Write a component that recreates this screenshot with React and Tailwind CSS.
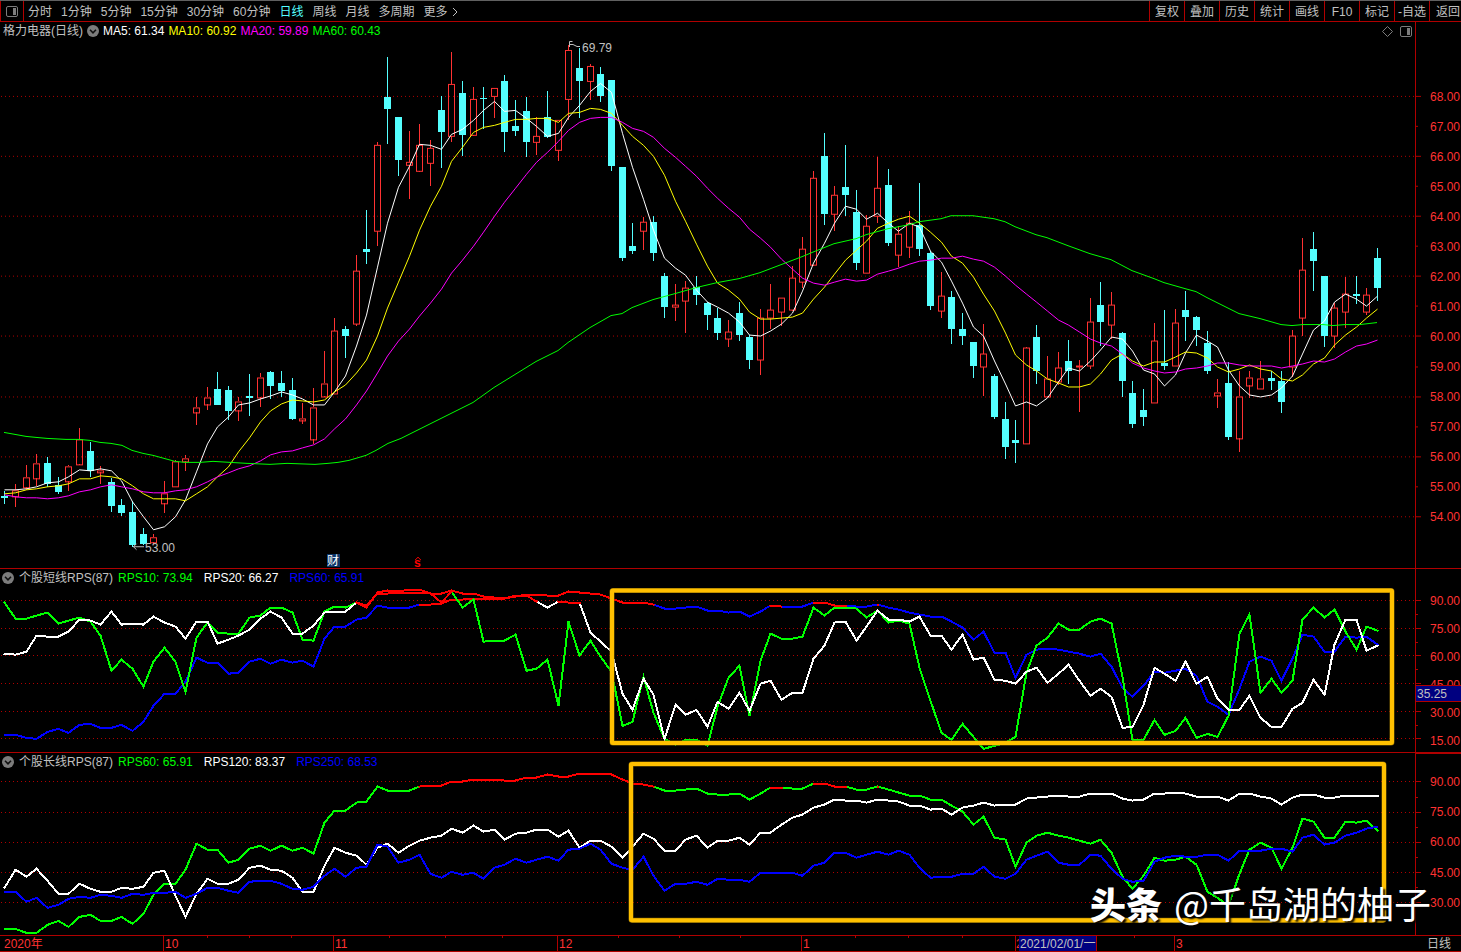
import clsx from 'clsx';

const periods = ['分时', '1分钟', '5分钟', '15分钟', '30分钟', '60分钟', '日线', '周线', '月线', '多周期'];
const tools = ['复权', '叠加', '历史', '统计', '画线', 'F10', '标记', '-自选'];

const UP = '#ff3232';
const DOWN = '#54ffff';
const GRID = '#b00000';

// [direction, high, body top, body bottom, low] in plot coordinates
const candles = [
  ['d', 492, 497, 499, 505], ['u', 485, 491, 497, 508], ['u', 466, 478, 488, 491], ['u', 455, 464, 479, 487],
  ['d', 458, 464, 485, 488], ['d', 478, 486, 493, 495], ['u', 466, 467, 482, 492], ['u', 429, 440, 465, 466],
  ['d', 443, 452, 472, 478], ['u', 467, 471, 473, 485], ['d', 479, 483, 507, 513], ['d', 500, 506, 514, 517],
  ['d', 502, 513, 546, 548], ['d', 529, 535, 545, 546], ['u', 535, 538, 543, 545], ['u', 482, 494, 504, 514],
  ['u', 461, 462, 487, 487], ['u', 456, 459, 462, 472], ['u', 398, 408, 413, 426], ['u', 388, 398, 405, 411],
  ['d', 373, 390, 406, 406], ['d', 387, 391, 412, 421], ['u', 398, 402, 411, 422], ['d', 375, 397, 399, 417],
  ['u', 374, 378, 398, 408], ['d', 371, 373, 387, 400], ['d', 372, 384, 392, 398], ['d', 379, 391, 420, 421],
  ['u', 404, 419, 421, 425], ['u', 389, 408, 440, 445], ['u', 351, 384, 397, 398], ['u', 318, 331, 394, 394],
  ['d', 326, 329, 336, 358], ['u', 255, 271, 324, 326], ['d', 210, 249, 252, 264], ['u', 142, 145, 231, 246],
  ['d', 57, 97, 109, 144], ['d', 117, 117, 160, 176], ['u', 131, 162, 165, 199], ['u', 124, 145, 171, 172],
  ['u', 140, 148, 163, 186], ['d', 96, 110, 132, 168], ['u', 52, 84, 136, 142], ['d', 81, 93, 135, 156],
  ['u', 87, 99, 135, 136], ['d', 87, 98, 99, 129], ['u', 88, 88, 96, 118], ['d', 75, 81, 132, 152],
  ['d', 100, 126, 131, 136], ['d', 97, 111, 142, 157], ['u', 117, 136, 142, 155], ['d', 91, 117, 137, 138],
  ['u', 120, 120, 150, 161], ['u', 45, 50, 99, 120], ['d', 48, 68, 81, 118], ['u', 64, 66, 81, 100],
  ['d', 67, 74, 96, 102], ['d', 80, 80, 166, 171], ['d', 167, 167, 258, 261], ['d', 223, 246, 251, 254],
  ['u', 217, 222, 231, 250], ['d', 216, 222, 253, 261], ['d', 273, 276, 307, 318], ['u', 284, 305, 307, 321],
  ['u', 281, 288, 301, 333], ['d', 276, 287, 295, 305], ['d', 302, 303, 315, 330], ['d', 308, 318, 333, 340],
  ['u', 320, 332, 339, 347], ['d', 302, 313, 335, 341], ['d', 335, 337, 360, 369], ['u', 309, 318, 360, 376],
  ['u', 284, 310, 318, 329], ['u', 298, 298, 312, 326], ['u', 266, 278, 310, 311], ['u', 237, 249, 282, 288],
  ['u', 171, 178, 265, 266], ['d', 133, 156, 214, 225], ['u', 186, 195, 214, 231], ['d', 145, 187, 195, 216],
  ['d', 190, 212, 263, 270], ['u', 215, 226, 273, 273], ['u', 157, 188, 216, 223], ['d', 169, 185, 243, 246],
  ['u', 226, 234, 255, 267], ['u', 211, 223, 247, 258], ['d', 183, 225, 249, 256], ['d', 251, 253, 306, 310],
  ['u', 272, 296, 311, 318], ['d', 291, 297, 329, 344], ['d', 313, 329, 336, 345], ['d', 342, 342, 366, 379],
  ['u', 324, 354, 367, 397], ['d', 375, 377, 418, 420], ['d', 403, 420, 448, 460], ['d', 421, 441, 444, 464],
  ['u', 347, 348, 444, 444], ['d', 325, 337, 372, 385], ['u', 356, 379, 397, 398], ['u', 352, 368, 382, 386],
  ['d', 340, 361, 371, 385], ['u', 360, 366, 367, 413], ['u', 298, 322, 366, 369], ['d', 282, 305, 322, 346],
  ['u', 292, 305, 325, 339], ['d', 332, 333, 382, 398], ['d', 382, 394, 425, 429], ['d', 390, 411, 418, 427],
  ['u', 323, 341, 403, 403], ['d', 310, 363, 366, 370], ['u', 309, 323, 366, 366], ['d', 291, 310, 317, 341],
  ['d', 316, 317, 330, 346], ['d', 331, 343, 371, 375], ['u', 380, 393, 396, 409], ['d', 362, 384, 438, 441],
  ['u', 371, 397, 439, 453], ['u', 372, 378, 386, 399], ['u', 361, 379, 389, 389], ['d', 372, 379, 382, 391],
  ['d', 372, 382, 403, 414], ['u', 330, 336, 367, 378], ['u', 238, 270, 318, 336], ['d', 232, 249, 261, 291],
  ['d', 276, 276, 336, 347], ['u', 303, 308, 336, 348], ['u', 277, 294, 312, 328], ['d', 276, 294, 296, 304],
  ['u', 288, 295, 312, 315], ['d', 248, 258, 288, 301],
];

// averages for the first bars, whose history is off screen
const ma5Seed = [490, 490, 489, 487];
const ma10Seed = [494, 493, 490, 489, 487, 486, 484, 479, 479];
const ma20Seed = [495, 497, 498, 498, 499, 498, 496, 492, 490, 487, 485, 487, 489, 492, 493, 493, 491, 490, 487];

const ma60 =
  '4,433 15,435 26,437 36,438 47,439 66,440 79,440 90,441 100,443 111,444 122,446 132,451 143,454 153,456 164,459 175,462 185,463 200,463 213,462 230,463 247,464 270,465 287,464 315,465 328,464 338,463 349,461 366,456 376,451 388,444 401,439 441,419 473,403 494,388 515,375 536,362 558,351 568,343 590,328 611,316 622,314 632,308 653,300 675,294 696,288 717,283 739,279 760,273 781,265 802,257 814,252 834,244 856,239 866,235 888,229 909,225 919,222 941,219 951,216 973,216 994,219 1005,222 1015,227 1036,235 1047,238 1068,246 1090,254 1111,260 1132,271 1154,279 1164,283 1185,289 1196,292 1207,298 1217,303 1239,314 1260,319 1281,325 1292,326 1303,325 1323,325 1333,326 1345,325 1360,325 1377,323';

const shortRps = [
  {
    color: '#0000ff',
    hot: [[39, 61], [72, 73], [76, 79], [82, 82]],
    data: [735, 735, 738, 739, 732, 729, 733, 725, 724, 728, 728, 725, 731, 722, 706, 694, 694, 682, 658, 663, 663, 674, 673, 662, 659, 664, 660, 663, 661, 667, 639, 627, 627, 620, 618, 606, 608, 608, 608, 605, 605, 604, 600, 600, 599, 599, 599, 599, 597, 595, 595, 596, 596, 592, 593, 594, 595, 599, 603, 603, 603, 605, 609, 609, 608, 607, 611, 611, 613, 612, 617, 612, 606, 607, 607, 607, 603, 603, 606, 606, 607, 607, 605, 608, 610, 613, 615, 617, 617, 622, 628, 640, 632, 653, 653, 678, 655, 650, 649, 650, 652, 654, 657, 654, 667, 688, 697, 686, 672, 673, 671, 669, 676, 702, 707, 715, 689, 662, 657, 661, 681, 659, 635, 637, 652, 652, 637, 638, 637, 645],
  },
  {
    color: '#00ff00',
    hot: [[33, 42]],
    data: [603, 619, 619, 616, 613, 624, 621, 618, 622, 636, 671, 660, 669, 687, 662, 648, 662, 692, 638, 623, 633, 634, 634, 618, 616, 608, 608, 613, 640, 641, 612, 607, 608, 603, 608, 593, 591, 592, 590, 590, 594, 603, 592, 608, 600, 642, 641, 641, 635, 671, 669, 660, 706, 622, 656, 641, 657, 672, 726, 722, 677, 713, 739, 745, 740, 740, 746, 707, 678, 666, 716, 661, 634, 639, 639, 637, 608, 616, 608, 608, 609, 618, 611, 623, 621, 624, 668, 701, 733, 740, 724, 737, 749, 746, 743, 737, 673, 646, 638, 624, 630, 630, 622, 619, 624, 677, 740, 740, 720, 735, 731, 718, 738, 734, 737, 716, 634, 615, 693, 679, 693, 681, 620, 608, 618, 610, 632, 650, 627, 631],
  },
  {
    color: '#ffffff',
    hot: [[33, 50], [52, 54]],
    data: [654, 655, 652, 636, 637, 637, 632, 620, 621, 625, 612, 625, 624, 625, 617, 623, 627, 639, 622, 622, 644, 640, 636, 630, 619, 612, 618, 634, 634, 626, 613, 612, 612, 603, 606, 594, 594, 593, 593, 593, 594, 594, 591, 594, 594, 597, 598, 599, 596, 596, 602, 608, 602, 603, 603, 633, 642, 652, 694, 710, 679, 695, 739, 705, 715, 710, 727, 702, 709, 693, 711, 684, 681, 700, 693, 693, 659, 646, 623, 622, 641, 627, 611, 620, 620, 622, 617, 636, 636, 650, 635, 660, 658, 680, 681, 684, 672, 668, 683, 674, 665, 681, 696, 689, 697, 728, 727, 705, 668, 674, 681, 662, 684, 677, 699, 710, 710, 696, 718, 727, 727, 709, 703, 680, 695, 645, 620, 620, 651, 646],
  },
];

const longRps = [
  {
    color: '#00ff00',
    hot: [[39, 61], [72, 73], [76, 79], [82, 82]],
    data: [928, 928, 932, 932, 924, 920, 926, 916, 914, 920, 920, 916, 923, 913, 894, 883, 883, 869, 843, 849, 849, 862, 859, 848, 845, 850, 845, 850, 847, 853, 822, 810, 810, 802, 801, 786, 790, 790, 790, 786, 785, 785, 781, 781, 779, 779, 779, 780, 780, 777, 777, 774, 776, 776, 773, 773, 773, 774, 779, 783, 784, 786, 790, 790, 789, 788, 793, 794, 794, 793, 799, 793, 787, 787, 788, 788, 783, 783, 786, 786, 789, 789, 786, 789, 792, 795, 795, 799, 799, 805, 811, 824, 816, 837, 839, 866, 842, 835, 832, 835, 837, 840, 843, 839, 852, 876, 888, 875, 857, 860, 859, 856, 864, 891, 897, 905, 873, 849, 842, 847, 868, 847, 818, 821, 837, 837, 821, 822, 820, 830],
  },
  {
    color: '#ffffff',
    hot: [],
    data: [887, 869, 876, 868, 880, 893, 893, 883, 888, 891, 891, 887, 888, 886, 872, 870, 895, 916, 893, 878, 883, 883, 879, 867, 865, 869, 870, 877, 891, 891, 865, 847, 852, 855, 864, 847, 843, 852, 845, 840, 837, 835, 828, 832, 825, 831, 829, 839, 833, 832, 829, 829, 836, 830, 847, 840, 840, 846, 857, 846, 833, 838, 850, 850, 839, 835, 847, 840, 840, 837, 844, 832, 832, 824, 817, 814, 807, 804, 799, 800, 800, 802, 799, 800, 801, 805, 805, 809, 808, 814, 807, 805, 802, 805, 804, 804, 798, 797, 796, 795, 796, 796, 793, 793, 793, 798, 800, 799, 793, 793, 792, 793, 796, 796, 796, 800, 793, 793, 796, 798, 804, 797, 794, 794, 797, 797, 795, 795, 795, 795],
  },
  {
    color: '#0000ff',
    hot: [],
    data: [891, 891, 901, 897, 907, 904, 898, 896, 897, 894, 895, 897, 893, 894, 892, 892, 891, 897, 893, 887, 887, 890, 892, 881, 880, 880, 883, 888, 889, 886, 875, 868, 876, 867, 866, 844, 846, 862, 859, 854, 873, 877, 871, 874, 872, 878, 867, 864, 858, 862, 859, 856, 860, 849, 848, 843, 849, 863, 867, 869, 856, 875, 890, 883, 883, 881, 884, 878, 879, 879, 881, 872, 872, 872, 872, 875, 865, 862, 852, 852, 857, 854, 851, 854, 850, 854, 867, 877, 876, 876, 873, 873, 866, 876, 878, 873, 859, 855, 851, 862, 864, 864, 854, 855, 868, 878, 881, 880, 861, 857, 855, 856, 856, 854, 854, 860, 850, 850, 850, 848, 848, 851, 837, 834, 844, 842, 835, 832, 828, 826],
  },
];

const barX = (i) => Math.round(4.4 + 10.64 * i);
const toPoints = (data, from = 0) => data.map((y, i) => `${barX(i + from) + 0.5},${y + 0.5}`).join(' ');

const closes = candles.map(([dir, , top, bottom]) => (dir === 'u' ? top : bottom));

function average(n, seed) {
  return closes.map((_, i) => {
    if (i < n - 1) return seed[i];
    const sum = closes.slice(i - n + 1, i + 1).reduce((a, b) => a + b, 0);
    return Math.round(sum / n);
  });
}

function Grid({ rows }) {
  return rows.map((y) => (
    <line key={y} x1="1" x2="1415" y1={y + 0.5} y2={y + 0.5} stroke={GRID} strokeDasharray="1 3" />
  ));
}

function Candle({ index, bar }) {
  const [dir, high, top, bottom, low] = bar;
  const x = barX(index);
  if (dir === 'd') {
    return (
      <g fill={DOWN}>
        <rect x={x} y={high} width="1" height={low - high} />
        <rect x={x - 3} y={top} width="7" height={bottom - top} />
      </g>
    );
  }
  return (
    <g fill={UP}>
      <rect x={x} y={high} width="1" height={top - high} />
      <rect x={x} y={bottom} width="1" height={low - bottom} />
      <rect x={x - 2.5} y={top + 0.5} width="6" height={bottom - top} fill="none" stroke={UP} />
    </g>
  );
}

function RpsLine({ series }) {
  return (
    <g fill="none" strokeWidth="2" strokeLinecap="square">
      <polyline points={toPoints(series.data)} stroke={series.color} />
      {series.hot.map(([from, to]) => {
        const part = series.data.slice(from, to + 1);
        return (
          <polyline
            key={from}
            points={from === to ? `${toPoints(part, from)} ${toPoints(part, from)}` : toPoints(part, from)}
            stroke="#ff0000"
          />
        );
      })}
    </g>
  );
}

function Plot({ viewBox, children }) {
  return (
    <svg
      viewBox={viewBox}
      preserveAspectRatio="none"
      shapeRendering="crispEdges"
      className="min-h-0 w-full flex-1 overflow-visible"
    >
      {children}
    </svg>
  );
}

function Axis({ labels, viewBox, ticks, minor, className, children }) {
  return (
    <div className={clsx('relative flex w-[46px] shrink-0 flex-col justify-between overflow-hidden border-l border-[#b00000] pl-3.5 leading-3 text-[#ff3232]', className)}>
      <svg viewBox={viewBox} preserveAspectRatio="none" shapeRendering="crispEdges" className="absolute inset-y-0 left-0 h-full w-2" stroke={GRID}>
        {ticks.map((y) => <line key={y} x1="0" x2="5" y1={y + 0.5} y2={y + 0.5} />)}
        {minor.map((y) => <line key={y} x1="0" x2="2" y1={y + 0.5} y2={y + 0.5} />)}
      </svg>
      {labels.map((label) => <span key={label}>{label}</span>)}
      {children}
    </div>
  );
}

function FoldButton() {
  return (
    <button type="button" aria-label="指标" className="shrink-0">
      <svg width="12" height="12" viewBox="0 0 12 12">
        <circle cx="6" cy="6" r="6" fill="#7c7c7c" />
        <path d="M3 4.8 6 7.8 9 4.8" fill="none" stroke="#101010" strokeWidth="1.6" />
      </svg>
    </button>
  );
}

function PanelIcon() {
  return (
    <svg width="12" height="11" viewBox="0 0 12 11">
      <rect x="0.5" y="0.5" width="11" height="10" rx="1.5" fill="none" stroke="#7c7c7c" />
      <rect x="7" y="2" width="3" height="7" fill="#7c7c7c" />
    </svg>
  );
}

function TopBar() {
  return (
    <header className="flex h-[22px] shrink-0 items-stretch justify-between overflow-hidden border-t border-b border-t-[#606060] border-b-[#b00000]">
      <div className="flex items-center">
        <button type="button" aria-label="侧栏" className="flex h-full w-6 items-center justify-center border-x border-[#b00000]">
          <PanelIcon />
        </button>
        <nav className="flex items-center gap-[9px] pt-px pl-1">
          {periods.map((name) => (
            <button
              key={name}
              type="button"
              className={clsx('whitespace-nowrap', name === '日线' ? 'text-[#54ffff]' : 'text-[#c0c0c0]')}
            >
              {name}
            </button>
          ))}
          <button type="button" className="flex items-center gap-1 whitespace-nowrap text-[#c0c0c0]">
            更多
            <svg width="6" height="10" viewBox="0 0 6 10" fill="none" stroke="#c0c0c0">
              <path d="M1 1 5 5 1 9" />
            </svg>
          </button>
        </nav>
      </div>
      <div className="flex text-[#c0c0c0]">
        {tools.map((name) => (
          <button key={name} type="button" className="w-[35px] whitespace-nowrap border-l border-[#b00000] pt-px text-center">
            {name}
          </button>
        ))}
        <button type="button" className="w-8 overflow-hidden whitespace-nowrap border-l border-[#b00000] pt-px pl-1.5 text-left">
          返回
        </button>
      </div>
    </header>
  );
}

function PricePanel() {
  return (
    <section className="flex min-h-0 flex-[548] border-b border-[#b00000]">
      <div className="flex min-w-0 flex-1 flex-col">
        <div className="flex h-[18px] shrink-0 items-center gap-1 whitespace-nowrap px-[3px]">
          <span className="text-[#c0c0c0]">格力电器(日线)</span>
          <FoldButton />
          <span className="text-white">MA5: 61.34</span>
          <span className="text-[#ffff00]">MA10: 60.92</span>
          <span className="text-[#ff00ff]">MA20: 59.89</span>
          <span className="text-[#00ff00]">MA60: 60.43</span>
          <div className="ml-auto flex items-center gap-[7px]">
            <svg width="11" height="11" viewBox="0 0 11 11" fill="none" stroke="#7c7c7c">
              <path d="M5.5 0.5 10.5 5.5 5.5 10.5 0.5 5.5Z" />
            </svg>
            <PanelIcon />
          </div>
        </div>
        <Plot viewBox="0 40 1415 529">
          <Grid rows={[96, 156, 216, 276, 336, 397, 457, 517]} />
          {candles.map((bar, i) => <Candle key={i} index={i} bar={bar} />)}
          <g fill="none">
            <polyline points={toPoints(average(5, ma5Seed))} stroke="#ffffff" />
            <polyline points={toPoints(average(10, ma10Seed))} stroke="#ffff00" />
            <polyline points={toPoints(average(20, ma20Seed))} stroke="#ff00ff" />
            <polyline points={ma60} stroke="#00ff00" />
          </g>
          <g fill="none" stroke="#c0c0c0">
            <path d="M580 46.5h-3l-4-2h-4M569.5 47v-5.5h3" />
            <path d="M144 547.5h-11M136.5 544.5l-3 3 3 3" />
          </g>
          <g fill="#c0c0c0" fontSize="12">
            <text x="582" y="52">69.79</text>
            <text x="145" y="553">53.00</text>
          </g>
          <rect x="327" y="555" width="13" height="13" fill="#0b3468" />
          <text x="327" y="566" fontSize="12" fill="#ffffff">财</text>
          <path d="M415 561l3-3 3 3" fill="none" stroke="#ff0000" />
          <text x="414" y="568" fontSize="12" fontWeight="bold" fill="#ff0000">s</text>
        </Plot>
      </div>
      <Axis
        className="pt-[69px] pb-[45px]"
        viewBox="0 22 8 547"
        labels={['68.00', '67.00', '66.00', '65.00', '64.00', '63.00', '62.00', '61.00', '60.00', '59.00', '58.00', '57.00', '56.00', '55.00', '54.00']}
        ticks={[96, 156, 216, 276, 336, 397, 457, 517]}
        minor={[126, 186, 246, 306, 367, 427, 487]}
      />
    </section>
  );
}

function ShortPanel() {
  return (
    <section className="flex min-h-0 flex-[183] border-b border-[#b00000]">
      <div className="flex min-w-0 flex-1 flex-col">
        <div className="flex h-[18px] shrink-0 items-center gap-[11px] whitespace-nowrap pl-0.5">
          <div className="flex items-center gap-[5px]">
            <FoldButton />
            <span className="text-[#c0c0c0]">个股短线RPS(87)</span>
            <span className="text-[#00ff00]">RPS10: 73.94</span>
          </div>
          <span className="text-white">RPS20: 66.27</span>
          <span className="text-[#0000ff]">RPS60: 65.91</span>
        </div>
        <Plot viewBox="0 588 1415 164">
          <Grid rows={[601, 629, 656, 684, 712, 739]} />
          {shortRps.map((series) => <RpsLine key={series.color} series={series} />)}
          <g fill="none" strokeLinejoin="round" shapeRendering="auto">
            <rect x="612" y="591.5" width="780" height="152" rx="1" stroke="#7f6000" strokeWidth="5" />
            <rect x="612" y="591.5" width="780" height="152" rx="1" stroke="#ffc000" strokeWidth="4" />
          </g>
        </Plot>
      </div>
      <Axis
        className="pt-[26px] pb-[5px]"
        viewBox="0 570 8 182"
        labels={['90.00', '75.00', '60.00', '45.00', '30.00', '15.00']}
        ticks={[601, 629, 656, 684, 712, 739]}
        minor={[615, 643, 670, 698, 726]}
      >
        <output className="absolute inset-x-0 top-[116px] h-[17px] border-y border-[#b00000] bg-[#000080] pl-px leading-4 text-[#c0c0c0]">
          35.25
        </output>
      </Axis>
    </section>
  );
}

function LongPanel() {
  return (
    <section className="flex min-h-0 flex-[183] border-b border-[#b00000]">
      <div className="flex min-w-0 flex-1 flex-col">
        <div className="flex h-[18px] shrink-0 items-center gap-[11px] whitespace-nowrap pl-0.5">
          <div className="flex items-center gap-[5px]">
            <FoldButton />
            <span className="text-[#c0c0c0]">个股长线RPS(87)</span>
            <span className="text-[#00ff00]">RPS60: 65.91</span>
          </div>
          <span className="text-white">RPS120: 83.37</span>
          <span className="text-[#0000ff]">RPS250: 68.53</span>
        </div>
        <Plot viewBox="0 771 1415 164">
          <Grid rows={[781, 812, 842, 872, 902]} />
          {longRps.map((series) => <RpsLine key={series.color} series={series} />)}
          <g fill="none" strokeLinejoin="round" shapeRendering="auto">
            <rect x="631" y="764" width="753" height="156" rx="1" stroke="#7f6000" strokeWidth="5" />
            <rect x="631" y="764" width="753" height="156" rx="1" stroke="#ffc000" strokeWidth="4" />
          </g>
        </Plot>
      </div>
      <Axis
        className="border-t pt-[22px] pb-[26px]"
        viewBox="0 754 8 181"
        labels={['90.00', '75.00', '60.00', '45.00', '30.00']}
        ticks={[781, 812, 842, 872, 902]}
        minor={[797, 827, 857, 887]}
      />
    </section>
  );
}

function DateBar() {
  return (
    <footer className="flex h-4 shrink-0 border-b border-[#b00000] leading-4 text-[#ff3232]">
      <div className="relative grid min-w-0 flex-1 grid-cols-[163fr_170fr_224fr_244fr_214fr_159fr_241fr]">
        <span className="pl-1">2020年</span>
        <span className="border-l border-[#b00000] pl-px">10</span>
        <span className="border-l border-[#b00000] pl-px">11</span>
        <span className="border-l border-[#b00000] pl-px">12</span>
        <span className="border-l border-[#b00000] pl-px">1</span>
        <span className="relative border-l border-[#b00000]">
          2
          <span className="absolute top-0 left-[3px] h-[15px] whitespace-nowrap border-r border-[#b00000] bg-[#000080] px-px text-[#c0c0c0]">
            2021/02/01/一
          </span>
        </span>
        <span className="border-l border-[#b00000] pl-px">3</span>
        <svg viewBox="0 0 1415 3" preserveAspectRatio="none" className="absolute inset-x-0 top-0 h-[3px] w-full" fill={GRID}>
          {[207, 249, 291, 389, 445, 502, 618, 679, 740, 855, 908, 962, 1134].map((x) => (
            <rect key={x} x={x} y="0" width="1" height="2" />
          ))}
        </svg>
      </div>
      <span className="w-[46px] shrink-0 pl-3 text-[#c0c0c0]">日线</span>
    </footer>
  );
}

export default function App() {
  return (
    <main className="relative flex h-screen min-h-[600px] flex-col overflow-hidden bg-black font-['Liberation_Sans','Noto_Sans_CJK_SC',sans-serif] text-[12px] leading-4">
      <TopBar />
      <PricePanel />
      <ShortPanel />
      <LongPanel />
      <DateBar />
      <div className="pointer-events-none absolute right-[30px] bottom-[22px] flex items-center gap-3 whitespace-nowrap font-['Noto_Sans_CJK_SC',sans-serif] leading-[54px] text-white [text-shadow:2px_2px_2px_#000]">
        <span className="text-[36px] font-black">头条</span>
        <span className="text-[37px]">@千岛湖的柚子</span>
      </div>
    </main>
  );
}
